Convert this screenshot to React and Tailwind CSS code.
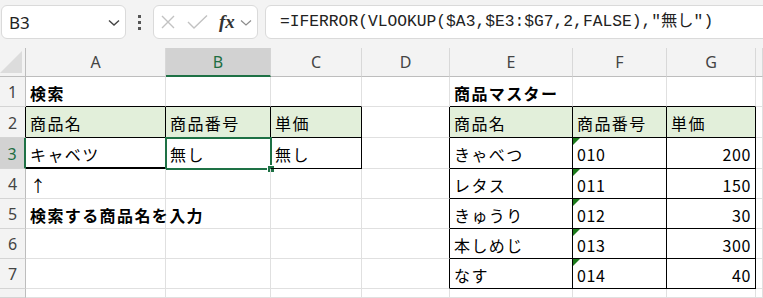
import React from 'react';

const JP = "font-['Noto_Sans_CJK_JP',sans-serif]";

// column widths: row header, A..G, overflow
const COLS = ['', 'A', 'B', 'C', 'D', 'E', 'F', 'G', ''];
const ROWS = [1, 2, 3, 4, 5, 6, 7, 8];

const cells = {
  '1,1': { t: '検索', bold: true },
  '2,1': { t: '商品名' },
  '2,2': { t: '商品番号' },
  '2,3': { t: '単価' },
  '3,1': { t: 'キャベツ' },
  '3,2': { t: '無し' },
  '3,3': { t: '無し' },
  '4,1': { t: '↑' },
  '5,1': { t: '検索する商品名を入力', bold: true },
  '1,5': { t: '商品マスター', bold: true },
  '2,5': { t: '商品名' },
  '2,6': { t: '商品番号' },
  '2,7': { t: '単価' },
};

const master = [
  ['きゃべつ', '010', '200'],
  ['レタス', '011', '150'],
  ['きゅうり', '012', '30'],
  ['本しめじ', '013', '300'],
  ['なす', '014', '40'],
];
master.forEach((m, i) => {
  cells[`${i + 3},5`] = { t: m[0] };
  cells[`${i + 3},6`] = { t: m[1], num: true, flag: true };
  cells[`${i + 3},7`] = { t: m[2], num: true, right: true };
});

const inTable = (r, c) =>
  (r >= 2 && r <= 3 && c >= 1 && c <= 3) || (r >= 2 && r <= 7 && c >= 5 && c <= 7);

function FormulaBar() {
  return (
    <div className="h-[48px] bg-[#f3f3f3] flex items-start pt-[5px] pl-[1px] overflow-hidden">
      {/* name box */}
      <div className="w-[125px] h-[34px] bg-white border border-[#dadada] rounded-[6px] flex items-center justify-between pl-[7px] pr-[5px] shrink-0">
        <span className="font-['Noto_Sans',sans-serif] text-[17px] text-[#222] leading-none">B3</span>
        <svg width="12" height="8" viewBox="0 0 12 8" className="mt-[2px]">
          <path d="M1 1.5 L6 6 L11 1.5" fill="none" stroke="#444" strokeWidth="1.4" />
        </svg>
      </div>
      {/* dots */}
      <div className="w-[27px] h-[34px] flex flex-col items-center justify-center gap-[3px] shrink-0">
        <span className="w-[3px] h-[3px] bg-[#555]" />
        <span className="w-[3px] h-[3px] bg-[#555]" />
        <span className="w-[3px] h-[3px] bg-[#555]" />
      </div>
      {/* cancel / enter / fx */}
      <div className="w-[105px] h-[34px] bg-white border border-[#dadada] rounded-[6px] flex items-center pl-[6px] shrink-0">
        <svg width="16" height="16" viewBox="0 0 16 16">
          <path d="M2 2 L14 14 M14 2 L2 14" stroke="#c2c2c2" strokeWidth="1.4" />
        </svg>
        <svg width="22" height="16" viewBox="0 0 22 16" className="ml-[11px]">
          <path d="M1 8 L7 14 L20 1.5" fill="none" stroke="#c2c2c2" strokeWidth="1.4" />
        </svg>
        <span className="ml-[10px] font-['Liberation_Serif',serif] italic font-bold text-[19px] text-[#333] leading-none -mt-[2px]">fx</span>
        <svg width="12" height="8" viewBox="0 0 12 8" className="ml-[5px] mt-[2px]">
          <path d="M1 1.5 L6 6 L11 1.5" fill="none" stroke="#8c8c8c" strokeWidth="1.2" />
        </svg>
      </div>
      {/* formula */}
      <div className="ml-[7px] -mr-[8px] flex-1 h-[34px] bg-white border border-[#dadada] rounded-[6px] flex items-center pl-[14px]">
        <span className="font-['Liberation_Mono','Noto_Sans_CJK_JP',monospace] text-[16.3px] text-[#222] whitespace-nowrap leading-none">
          =IFERROR(VLOOKUP($A3,$E3:$G7,2,FALSE),"無し")
        </span>
      </div>
    </div>
  );
}

function ColumnHeader({ c }) {
  if (c === 0) {
    return (
      <div className="relative bg-[#f3f3f3] border-r border-b border-[#bdbdbd]">
        <svg width="24" height="24" viewBox="0 0 24 24" className="absolute right-[2px] bottom-[2px]">
          <polygon points="23,1 23,23 1,23" fill="#dcdcdc" />
        </svg>
      </div>
    );
  }
  const sel = c === 2;
  return (
    <div
      className={
        sel
          ? "flex items-center justify-center bg-[#d2d2d2] border-r border-[#d4d4d4] border-b-2 border-b-[#1e7145] text-[#1e6e42] font-['Noto_Sans',sans-serif] text-[16px]"
          : "flex items-center justify-center bg-[#f3f3f3] border-r border-[#d8d8d8] border-b border-b-[#bdbdbd] text-[#444] font-['Noto_Sans',sans-serif] text-[16px]"
      }
    >
      {COLS[c]}
    </div>
  );
}

function RowHeader({ r }) {
  const sel = r === 3;
  return (
    <div
      className={
        sel
          ? "flex items-center justify-center bg-[#d2d2d2] border-b border-[#d4d4d4] border-r-2 border-r-[#1e7145] text-[#1e6e42] font-['Noto_Sans',sans-serif] text-[16px] pt-[1px]"
          : r === 2
          ? "flex items-center justify-center bg-[#f3f3f3] border-b border-[#d4d4d4] border-r border-r-black text-[#444] font-['Noto_Sans',sans-serif] text-[16px] pt-[1px]"
          : "flex items-center justify-center bg-[#f3f3f3] border-b border-[#d4d4d4] border-r border-r-[#bdbdbd] text-[#444] font-['Noto_Sans',sans-serif] text-[16px] pt-[1px]"
      }
    >
      {r < 8 ? r : ''}
    </div>
  );
}

function Cell({ r, c }) {
  const d = cells[`${r},${c}`];
  const blackR = inTable(r, c) || inTable(r, c + 1);
  const blackB = inTable(r, c) || inTable(r + 1, c);
  const green = r === 2 && inTable(r, c);
  const thickB = r === 3 && c === 1;

  const cls = [
    'relative flex items-center pt-[2px] whitespace-nowrap overflow-visible',
    blackR ? 'border-r border-r-black' : 'border-r border-r-[#e0e0e0]',
    thickB ? 'border-b-2 border-b-black' : blackB ? 'border-b border-b-black' : 'border-b border-b-[#e0e0e0]',
    green ? 'bg-[#e2efda]' : '',
    d && d.right ? 'justify-end pr-[4px]' : 'pl-[4px]',
  ].join(' ');

  return (
    <div className={cls}>
      {d && (
        <span
          className={
            d.num
              ? `${JP} text-[16px] text-black leading-none tracking-[0.6px]`
              : d.bold
              ? `${JP} text-[16px] font-bold text-black leading-none tracking-[1.4px]`
              : `${JP} text-[16px] text-black leading-none tracking-[1.4px]`
          }
        >
          {d.t}
        </span>
      )}
      {d && d.flag && (
        <svg width="7" height="7" viewBox="0 0 7 7" className="absolute left-0 top-0">
          <polygon points="0,0 7,0 0,7" fill="#1b7a1b" />
        </svg>
      )}
      {r === 3 && c === 2 && (
        <div className="absolute -left-[1px] -top-[1px] w-[107px] h-[33px] border-2 border-[#1e7145] pointer-events-none">
          <span className="absolute -right-[4px] -bottom-[4px] w-[6px] h-[6px] bg-[#1e7145] outline outline-1 outline-white" />
        </div>
      )}
    </div>
  );
}

export default function App() {
  return (
    <div className="w-[763px] h-[298px] overflow-hidden bg-white">
      <FormulaBar />
      <div className="grid grid-cols-[26px_140px_105px_91px_88px_123px_94px_89px_7px] grid-rows-[29px_30px_31px_31px_30px_30px_30px_30px_9px]">
        {COLS.map((_, c) => (
          <ColumnHeader key={`h${c}`} c={c} />
        ))}
        {ROWS.map((r) =>
          COLS.map((_, c) =>
            c === 0 ? <RowHeader key={`${r},${c}`} r={r} /> : <Cell key={`${r},${c}`} r={r} c={c} />
          )
        )}
      </div>
    </div>
  );
}
